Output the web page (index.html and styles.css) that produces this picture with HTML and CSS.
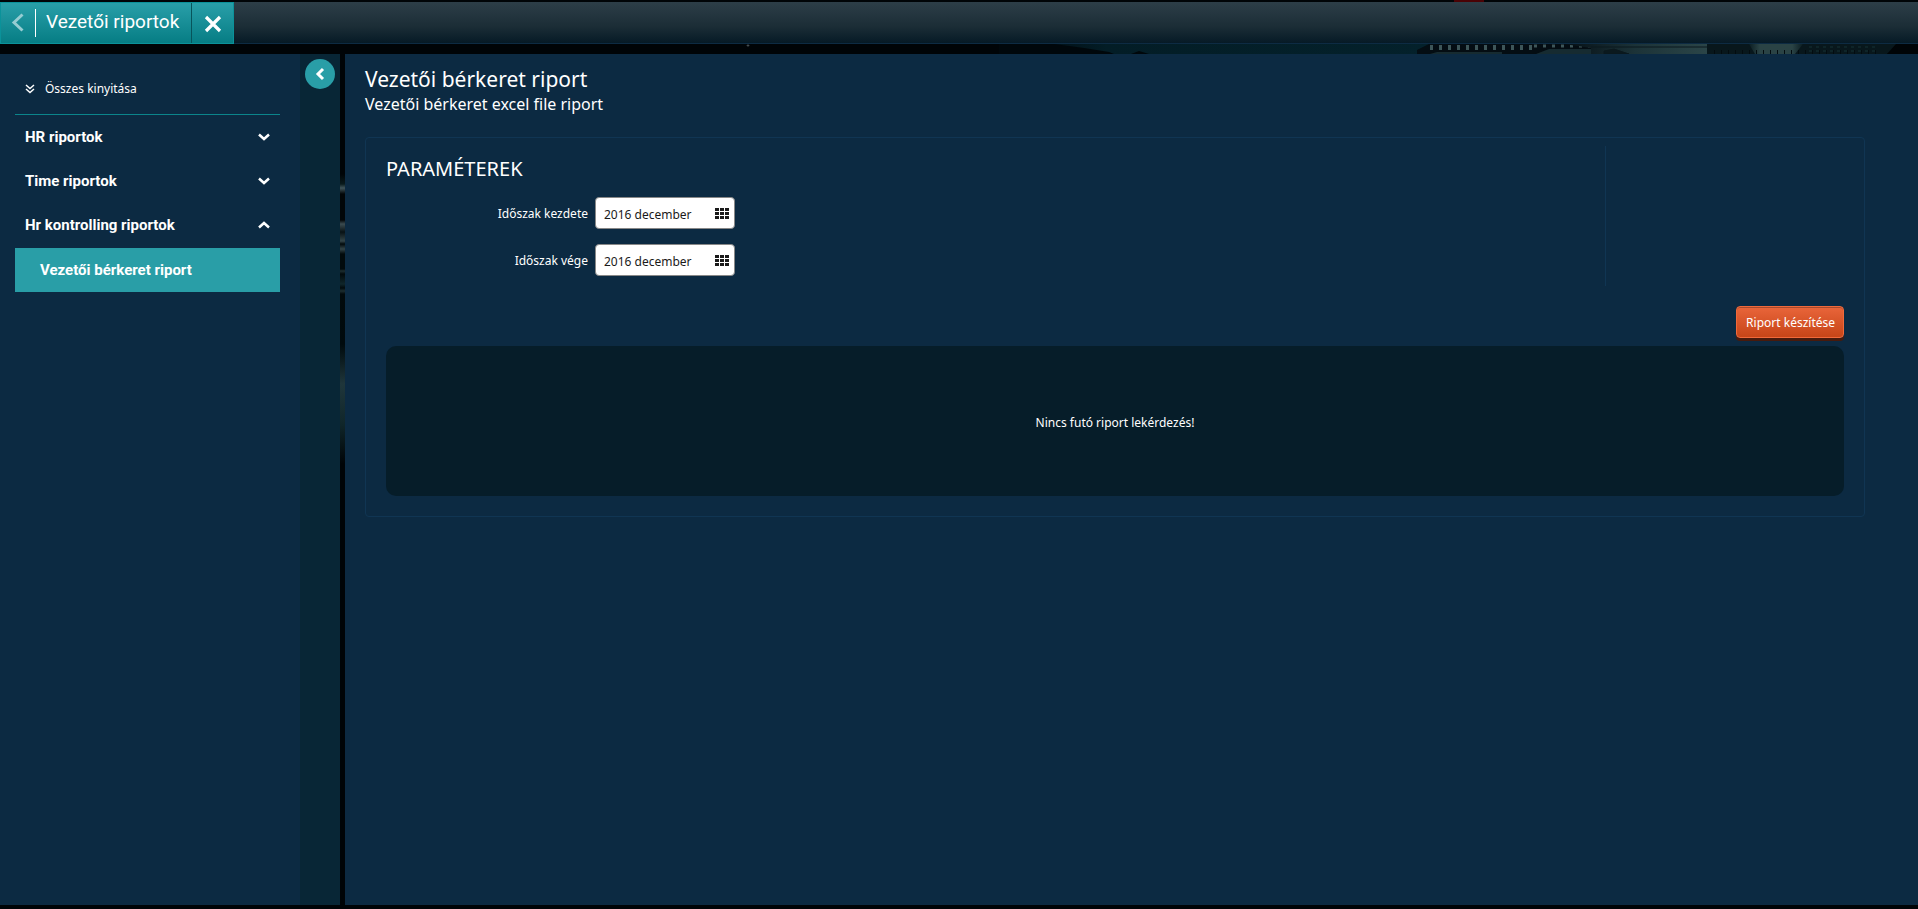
FILE: index.html
```html
<!DOCTYPE html>
<html lang="hu">
<head>
<meta charset="utf-8">
<title>Vezetői riportok</title>
<link rel="stylesheet" href="styles.css">
</head>
<body>
<header class="topbar">
  <div class="tab">
    <button class="tab-back" type="button" aria-label="Vissza"><svg width="14" height="20" viewBox="0 0 14 20"><path d="M11.500 1.500L3 9.500l8.500 8" fill="none" stroke="currentColor" stroke-width="3"/></svg></button>
    <span class="tab-title">Vezetői riportok</span>
    <button class="tab-close" type="button" aria-label="Bezárás"><svg width="18" height="18" viewBox="0 0 18 18"><path d="M2 2l14 14M16 2L2 16" fill="none" stroke="currentColor" stroke-width="3.200"/></svg></button>
  </div>
</header>
<div class="backdrop" aria-hidden="true">
  <svg width="958" height="10" viewBox="0 0 958 10">
    <defs>
      <linearGradient id="sky"><stop offset="0" stop-color="#000407"/><stop offset=".25" stop-color="#031d26"/><stop offset="1" stop-color="#04212b"/></linearGradient>
      <linearGradient id="wall"><stop offset="0" stop-color="#050f15"/><stop offset=".5" stop-color="#1c3338"/><stop offset="1" stop-color="#2b4548"/></linearGradient>
      <linearGradient id="tower"><stop offset="0" stop-color="#0b1d22"/><stop offset=".2" stop-color="#2a4345"/><stop offset=".8" stop-color="#2a4345"/><stop offset="1" stop-color="#0b1d22"/></linearGradient>
    </defs>
    <path d="M40 0H470V10H40z" fill="url(#sky)"/>
    <path d="M40 0h55l30 4 25 4 5 2H40zM172 10l8-3 10 3z" fill="#00070b"/>
    <path d="M458 10V6l12-6h240v10z" fill="#040d13"/>
    <path d="M471 3.500h104" stroke="#3e5659" stroke-width="5" stroke-dasharray="3 6"/>
    <path d="M575 2h62" stroke="#3e5659" stroke-width="3" stroke-dasharray="3 6"/>
    <path d="M478 8h65v2h-72zM590 5h42v5h-55z" fill="#162b31"/>
    <path d="M605 0h143v10H632V4z" fill="url(#wall)"/>
    <path d="M632 3h116M645 7l10-2 15 5h-25z" stroke="#0b191e" fill="#0b191e"/>
    <path d="M748 0h195l-15 10H748z" fill="#08171c"/>
    <path d="M790 0h54l-8 10h-40z" fill="url(#tower)"/>
    <path d="M755 8h165" stroke="#030c10" stroke-width="4" stroke-dasharray="1 6"/>
    <path d="M850 3h70M850 7h70" stroke="#0e2428" stroke-width="2" stroke-dasharray="3 4"/>
    <path d="M937 0h21v10h-30z" fill="#000407"/>
  </svg>
</div>
<div class="workspace">
  <nav class="sidebar" aria-label="Riportok">
    <button class="expand-all" type="button"><svg width="10" height="10" viewBox="0 0 10 10"><path d="M1 1l4 3.500L9 1M1 5l4 3.500L9 5" fill="none" stroke="currentColor" stroke-width="1.500"/></svg>Összes kinyitása</button>
    <ul class="menu">
      <li><button class="menu-group" type="button" aria-expanded="false">HR riportok<svg width="12" height="8" viewBox="0 0 12 8"><path d="M1 1.500l5 4.500 5-4.500" fill="none" stroke="currentColor" stroke-width="2.500"/></svg></button></li>
      <li><button class="menu-group" type="button" aria-expanded="false">Time riportok<svg width="12" height="8" viewBox="0 0 12 8"><path d="M1 1.500l5 4.500 5-4.500" fill="none" stroke="currentColor" stroke-width="2.500"/></svg></button></li>
      <li><button class="menu-group" type="button" aria-expanded="true">Hr kontrolling riportok<svg width="12" height="8" viewBox="0 0 12 8"><path d="M1 6.500L6 2l5 4.500" fill="none" stroke="currentColor" stroke-width="2.500"/></svg></button>
        <a class="menu-item" href="#berkeret" aria-current="page">Vezetői bérkeret riport</a></li>
    </ul>
  </nav>
  <div class="rail">
    <button class="collapse" type="button" aria-label="Menü összecsukása"><svg width="10" height="14" viewBox="0 0 10 14"><path d="M8 2L3 7l5 5" fill="none" stroke="currentColor" stroke-width="3"/></svg></button>
  </div>
  <div class="gutter" aria-hidden="true"></div>
  <main class="content" id="berkeret">
    <h1 class="title">Vezetői bérkeret riport</h1>
    <p class="subtitle">Vezetői bérkeret excel file riport</p>
    <section class="panel">
      <div class="params">
        <form class="form">
          <h2 class="heading">PARAMÉTEREK</h2>
          <div class="field">
            <label for="start">Időszak kezdete</label>
            <div class="picker"><input id="start" type="text" value="2016 december"><button type="button" aria-label="Időszak kezdete választó"><svg width="14" height="11" viewBox="0 0 14 11"><path d="M0 0h4v3H0zM5 0h4v3H5zM10 0h4v3h-4zM0 4h4v3H0zM5 4h4v3H5zM10 4h4v3h-4zM0 8h4v3H0zM5 8h4v3H5zM10 8h4v3h-4z" fill="currentColor"/></svg></button></div>
          </div>
          <div class="field">
            <label for="end">Időszak vége</label>
            <div class="picker"><input id="end" type="text" value="2016 december"><button type="button" aria-label="Időszak vége választó"><svg width="14" height="11" viewBox="0 0 14 11"><path d="M0 0h4v3H0zM5 0h4v3H5zM10 0h4v3h-4zM0 4h4v3H0zM5 4h4v3H5zM10 4h4v3h-4zM0 8h4v3H0zM5 8h4v3H5zM10 8h4v3h-4z" fill="currentColor"/></svg></button></div>
          </div>
        </form>
        <div class="params-side"></div>
      </div>
      <div class="actions"><button class="primary" type="button">Riport készítése</button></div>
      <div class="status" role="status">Nincs futó riport lekérdezés!</div>
    </section>
  </main>
</div>
</body>
</html>
```
FILE: styles.css
```css
* { box-sizing: border-box; }
body {
  margin: 0;
  min-height: 100vh;
  display: flex;
  flex-direction: column;
  padding: 2px 0 4px;
  background: linear-gradient(#4a0205, #4a0205) 77% 0 / 30px 2px no-repeat #000407;
  color: #fff;
  font: 12px/18px "Noto Sans", "Open Sans", sans-serif;
}
button, input { font: inherit; color: inherit; }
button { background: none; border: 0; padding: 0; cursor: pointer; }
svg { display: block; flex: none; }
h1, h2, p, ul { margin: 0; padding: 0; font-weight: 400; }
ul { list-style: none; }

.topbar {
  height: 42px;
  display: flex;
  background: linear-gradient(#2d3e48, #1b2d36 60%, #061a26);
  border-bottom: 1px solid #0d2b43;
}
.tab {
  display: flex;
  height: 42px;
  border: 1px solid #0b929a;
  background: linear-gradient(#299fa9, #067d84);
}
.tab-back { display: flex; align-items: center; padding: 0 10px; color: #96cdd2; }
.tab-title {
  display: flex;
  align-items: center;
  margin: 6px 0;
  padding: 0 12px 2px 10px;
  border-left: 1px solid #fff;
  font: 19px/26px Roboto, "Noto Sans", sans-serif;
}
.tab-close {
  width: 42px;
  display: flex;
  align-items: center;
  justify-content: center;
  padding-top: 2px;
  border-left: 1px solid #07545b;
}

.backdrop {
  height: 10px;
  padding-left: 50%;
  overflow: hidden;
  background: radial-gradient(#5a6468, transparent 70%) 39% 0 / 4px 3px no-repeat;
}

.workspace { flex: 1; display: flex; }
.sidebar { width: 300px; padding: 20px 20px 0 15px; background: #0c2a42; }
.expand-all {
  width: 100%;
  height: 41px;
  display: flex;
  align-items: center;
  gap: 10px;
  padding: 0 10px 10px;
  border-bottom: 1px solid #0b858b;
}
.menu { font: 700 15px/20px Roboto, "Noto Sans", sans-serif; }
.menu-group {
  width: 100%;
  height: 44px;
  display: flex;
  align-items: center;
  justify-content: space-between;
  padding: 0 10px;
}
.menu-item {
  height: 44px;
  display: flex;
  align-items: center;
  margin-top: 1px;
  padding: 0 25px;
  background: #299ea7;
  color: inherit;
  text-decoration: none;
}
.rail { width: 40px; padding: 5px; background: #082636; }
.collapse {
  width: 30px;
  height: 30px;
  display: flex;
  align-items: center;
  justify-content: center;
  border-radius: 50%;
  background: #299ea7;
}
.gutter {
  width: 5px;
  background: linear-gradient(#000407 120px, #091a1c 130px, #40545a 134px, #020608 140px, #020608 166px, #3b4b50 170px, #081215 178px, #334448 187px, #020a0c 190px, #334448 195px, #020a0c 200px, #020a0c 215px, #1d2e31 217px, #020a0c 220px, #10262b 230px, #020a0c 234px, #1d2e31 237px, #020a0c 240px, #000a0d 290px, #1f363b 330px, #10262a 370px, #000407 410px);
}

.content { flex: 1; min-width: 0; padding: 11px 53px 20px 20px; background: #0c2a42; }
.title { font-size: 21px; line-height: 28px; }
.subtitle { font-size: 16px; line-height: 22px; }
.panel { margin-top: 22px; padding: 8px 20px 20px; border: 1px solid #103553; border-radius: 4px; }
.params { display: flex; }
.form { flex: 1; padding-top: 8px; }
.params-side { width: 239px; border-left: 1px solid #103553; height: 140px; }
.heading { font-size: 20px; line-height: 30px; }
.field { display: flex; align-items: center; gap: 7px; height: 32px; margin-top: 15px; }
.heading + .field { margin-top: 13px; }
.field label { width: 202px; padding-top: 2px; text-align: right; }
.picker {
  width: 140px;
  height: 32px;
  display: flex;
  align-items: center;
  padding: 0 5px 0 8px;
  border: 1px solid #888;
  border-radius: 4px;
  background: #fff;
  color: #1a1a1a;
}
.picker input { flex: 1; min-width: 0; padding: 3px 0 0; border: 0; background: none; outline: 0; }
.actions { display: flex; justify-content: flex-end; padding: 20px 0 8px; }
.primary {
  height: 32px;
  padding: 2px 8px 0 9px;
  border: 1px solid #f0693b;
  border-radius: 4px;
  background: linear-gradient(#e9653a, #c74518);
  box-shadow: 0 3px 0 #481a0c, inset 0 1px 0 #a84a2c;
}
.status {
  min-height: 150px;
  display: flex;
  align-items: center;
  justify-content: center;
  padding-top: 4px;
  border-radius: 10px;
  background: #061d29;
}
```
